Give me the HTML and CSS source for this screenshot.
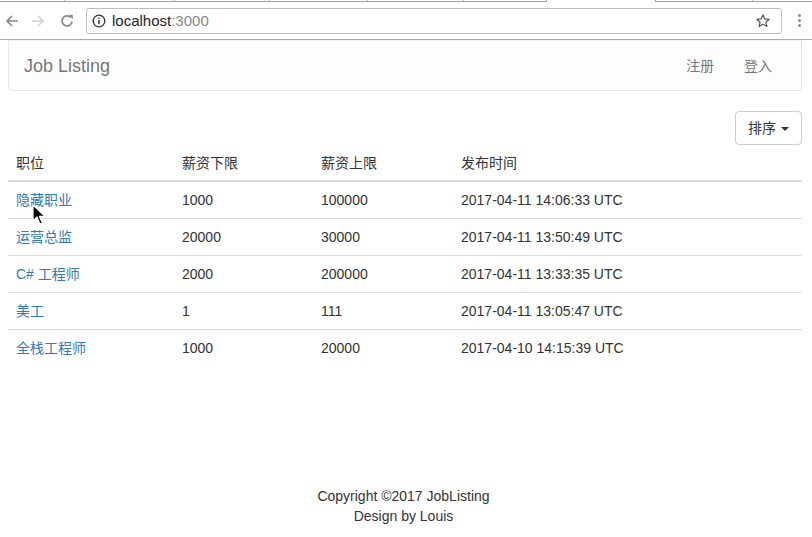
FILE: index.html
```html
<!DOCTYPE html>
<html lang="zh">
<head>
<meta charset="utf-8">
<title>Job Listing</title>
<link rel="stylesheet" href="styles.css">
</head>
<body>
<div class="chrome">
  <div class="tabstrip">
    <span class="tab w65"></span>
    <span class="tab w110"></span>
    <span class="tab w95"></span>
    <span class="tab w98"></span>
    <span class="tab w96"></span>
    <span class="tab w83 last"></span>
    <span class="tab-active"></span>
    <span class="tab w98 first"></span>
    <span class="tab grow"></span>
  </div>
  <div class="toolbar">
    <div class="navbtns">
      <svg class="nb" width="16" height="16" viewBox="0 0 16 16"><path d="M14 8H3M8 3L3 8l5 5" fill="none" stroke="#8a8a8a" stroke-width="1.6"/></svg>
      <svg class="nb" width="16" height="16" viewBox="0 0 16 16"><path d="M2 8h11M8 3l5 5-5 5" fill="none" stroke="#d0d0d0" stroke-width="1.6"/></svg>
      <svg class="nb" width="16" height="16" viewBox="0 0 16 16"><path d="M13 8.5A5 5 0 1 1 11.6 4.4" fill="none" stroke="#8a8a8a" stroke-width="1.8"/><path d="M9.5 1.8L13.8 2v4.3z" fill="#8a8a8a"/></svg>
    </div>
    <div class="omnibox">
      <svg class="info" width="14" height="14" viewBox="0 0 14 14"><circle cx="7" cy="7" r="5.8" fill="none" stroke="#333" stroke-width="1.3"/><rect x="6.3" y="6" width="1.4" height="4.2" fill="#333"/><rect x="6.3" y="3.6" width="1.4" height="1.4" fill="#333"/></svg>
      <span class="host">localhost</span><span class="port">:3000</span>
      <svg class="star" width="16" height="16" viewBox="0 0 16 16"><path d="M8 1.8l1.8 4.1 4.4.4-3.3 2.9 1 4.3L8 11.2l-3.9 2.3 1-4.3-3.3-2.9 4.4-.4z" fill="none" stroke="#555" stroke-width="1.2" stroke-linejoin="round"/></svg>
    </div>
    <div class="kebab"><i></i><i></i><i></i></div>
  </div>
</div>

<div class="page">
  <nav class="navbar">
    <a class="brand">Job Listing</a>
    <ul class="nav-right">
      <li><a>注册</a></li>
      <li><a>登入</a></li>
    </ul>
  </nav>

  <div class="content">
    <div class="toolbar-row">
      <button class="btn">排序 <span class="caret"></span></button>
    </div>
    <table class="table">
      <colgroup>
        <col class="c1"><col class="c2"><col class="c3"><col class="c4">
      </colgroup>
      <thead>
        <tr><th>职位</th><th>薪资下限</th><th>薪资上限</th><th>发布时间</th></tr>
      </thead>
      <tbody>
        <tr><td><a>隐藏职业</a></td><td>1000</td><td>100000</td><td>2017-04-11 14:06:33 UTC</td></tr>
        <tr><td><a>运营总监</a></td><td>20000</td><td>30000</td><td>2017-04-11 13:50:49 UTC</td></tr>
        <tr><td><a>C# 工程师</a></td><td>2000</td><td>200000</td><td>2017-04-11 13:33:35 UTC</td></tr>
        <tr><td><a>美工</a></td><td>1</td><td>111</td><td>2017-04-11 13:05:47 UTC</td></tr>
        <tr><td><a>全栈工程师</a></td><td>1000</td><td>20000</td><td>2017-04-10 14:15:39 UTC</td></tr>
      </tbody>
    </table>
  </div>

  <footer class="footer">
    <p>Copyright ©2017 JobListing</p>
    <p>Design by Louis</p>
  </footer>

  <svg class="cursor" width="14" height="22" viewBox="0 0 14 22"><path d="M1 1v16l4-4 3 7 2.4-1-3-6.6H13z" fill="#000" stroke="#fff" stroke-width="1.2" stroke-linejoin="round"/></svg>
</div>
</body>
</html>
```

FILE: styles.css
```css
* { box-sizing: border-box; }
html, body { margin: 0; padding: 0; }
body {
  width: 812px;
  height: 537px;
  overflow: hidden;
  background: #fff;
  font-family: "Liberation Sans", "Noto Sans CJK SC", sans-serif;
  font-size: 14px;
  line-height: 20px;
  color: #333;
}

/* browser chrome */
.chrome {
  height: 40px;
  border-bottom: 1px solid #a9a9a9;
  background: #fff;
}
.tabstrip {
  display: flex;
  height: 3px;
}
.tab {
  height: 2px;
  border-bottom: 1px solid #a0a0a0;
  border-right: 1px solid #b8b8b8;
}
.tab.last { border-right: 1px solid #a0a0a0; }
.tab.first { border-left: 1px solid #a0a0a0; }
.tab.grow { flex: 1; border-right: 0; }
.tab-active { width: 108px; }
.w65 { width: 65px; }
.w110 { width: 110px; }
.w95 { width: 95px; }
.w98 { width: 98px; }
.w96 { width: 96px; }
.w83 { width: 83px; }

.toolbar {
  display: flex;
  align-items: center;
  height: 36px;
  padding: 0 0 1px 4px;
}
.navbtns {
  display: flex;
  gap: 10px;
  align-items: center;
  width: 82px;
}
.nb { flex: none; }
.navbtns .nb:nth-child(3) { margin-left: 3px; }
.omnibox {
  display: flex;
  align-items: center;
  width: 696px;
  height: 26px;
  border: 1px solid #bdbdbd;
  border-radius: 3px;
  padding: 0 10px 0 5px;
  font-size: 15px;
}
.info { margin-right: 6px; flex: none; }
.host { color: #222; }
.port { color: #888; }
.star { margin-left: auto; flex: none; }
.kebab {
  display: flex;
  flex-direction: column;
  gap: 2px;
  margin-left: 16px;
}
.kebab i {
  display: block;
  width: 3px;
  height: 3px;
  border-radius: 50%;
  background: #8a8a8a;
}

/* page */
.page {
  position: relative;
  height: 497px;
  display: flex;
  flex-direction: column;
}
.navbar {
  display: flex;
  align-items: center;
  justify-content: space-between;
  height: 51px;
  margin: 0 10px 0 8px;
  border: 1px solid #e7e7e7;
  border-top-color: #f0f0f0;
  border-radius: 0 0 4px 4px;
  background: #fdfdfd;
}
.brand {
  padding: 0 15px;
  font-size: 18px;
  color: #777;
}
.nav-right {
  display: flex;
  list-style: none;
  margin: 0;
  padding: 0 14px 0 0;
}
.nav-right a {
  display: block;
  padding: 0 15px;
  color: #777;
}

.content {
  padding: 20px 10px 0 8px;
}
.toolbar-row {
  display: flex;
  justify-content: flex-end;
}
.btn {
  height: 34px;
  padding: 6px 12px;
  border: 1px solid #ccc;
  border-radius: 4px;
  background: #fff;
  font: inherit;
  color: #333;
}
.caret {
  display: inline-block;
  width: 0;
  height: 0;
  margin-left: 1px;
  vertical-align: middle;
  border-top: 4px solid #333;
  border-left: 4px solid transparent;
  border-right: 4px solid transparent;
}

.table {
  width: 100%;
  border-collapse: collapse;
  table-layout: fixed;
}
.c1 { width: 166px; }
.c2 { width: 139px; }
.c3 { width: 140px; }
.table th {
  text-align: left;
  font-weight: normal;
  padding: 8px 8px 7px;
  border-bottom: 2px solid #ddd;
}
.table td {
  padding: 8px;
  border-top: 1px solid #ddd;
}
.table tbody tr:first-child td { border-top: 0; }
.table a { color: #337ab7; }

.footer {
  margin-top: auto;
  padding: 0 5px 11px 0;
  text-align: center;
}
.footer p { margin: 0; }

.cursor {
  position: absolute;
  left: 32px;
  top: 164px;
}
```
